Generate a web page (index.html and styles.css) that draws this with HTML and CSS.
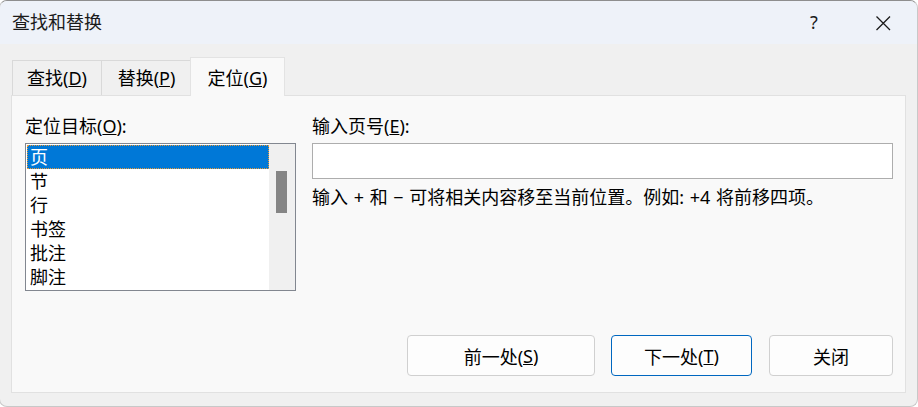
FILE: index.html
```html
<!DOCTYPE html>
<html lang="zh-CN">
<head>
<meta charset="utf-8">
<title>查找和替换</title>
<link rel="stylesheet" href="styles.css">
</head>
<body>
<div class="window">
  <div class="titlebar">
    <div class="title">查找和替换</div>
    <div class="caption-btn help">?</div>
    <div class="caption-btn close">
      <svg width="16" height="16" viewBox="0 0 16 16"><path d="M1.5 1.5 L15 15 M15 1.5 L1.5 15" stroke="#1b1b1b" stroke-width="1.3" fill="none"/></svg>
    </div>
  </div>
  <div class="body">
    <div class="tabs">
      <div class="tab t1">查找(<u>D</u>)</div>
      <div class="tab t2">替换(<u>P</u>)</div>
      <div class="tab t3 active">定位(<u>G</u>)</div>
    </div>
    <div class="panel">
      <div class="fields">
        <div class="col">
          <div class="label">定位目标(<u>O</u>):</div>
          <div class="listbox">
            <div class="items">
              <div class="item selected">页</div>
              <div class="item">节</div>
              <div class="item">行</div>
              <div class="item">书签</div>
              <div class="item">批注</div>
              <div class="item">脚注</div>
            </div>
            <div class="scrollbar"><div class="thumb"></div></div>
          </div>
        </div>
        <div class="col">
          <div class="label">输入页号(<u>E</u>):</div>
          <div class="input"></div>
          <div class="hint">输入 + 和 − 可将相关内容移至当前位置。例如: +4 将前移四项。</div>
        </div>
      </div>
      <div class="buttons">
        <div class="btn b1">前一处(<u>S</u>)</div>
        <div class="btn b2 default">下一处(<u>T</u>)</div>
        <div class="btn b3">关闭</div>
      </div>
    </div>
  </div>
</div>
</body>
</html>
```

FILE: styles.css
```css
* { box-sizing: border-box; }
html, body { margin: 0; padding: 0; background: #ffffff; }
body {
  font-family: "Noto Sans", "Noto Sans CJK SC", sans-serif;
  font-size: 18px;
  color: #000;
  width: 918px;
  height: 407px;
  overflow: hidden;
}
.window {
  margin-left: -1px;
  width: 919px;
  height: 407px;
  border: 1px solid #c8c8c8;
  border-top-color: #8e8e8e;
  border-radius: 8px;
  background: #f0f0f0;
  overflow: hidden;
  display: flex;
  flex-direction: column;
}
.titlebar {
  height: 43px;
  flex: none;
  background: #eef2f9;
  display: flex;
  align-items: center;
}
.title {
  flex: 1;
  padding-left: 12px;
  line-height: 43px;
  color: #1b1b1b;
}
.help {
  width: 52px;
  margin-right: 8px;
  text-align: center;
  line-height: 43px;
  color: #1b1b1b;
}
.close {
  width: 69px;
  height: 43px;
  display: flex;
  align-items: center;
  justify-content: center;
}
.body {
  flex: 1;
  padding: 13px 11px 0 11px;
}
.tabs {
  display: flex;
  align-items: flex-end;
  height: 38px;
  padding-left: 1px;
}
.tab {
  height: 35px;
  border: 1px solid #d9d9d9;
  border-bottom: none;
  line-height: 34px;
  text-align: center;
  background: #f0f0f0;
  margin-right: -1px;
}
.t1 { width: 90px; }
.t2 { width: 91px; }
.t3 { width: 95px; margin-left: -1px; }
.tab.active {
  height: 39px;
  margin-bottom: -1px;
  padding-top: 3px;
  background: #f9f9f9;
  border-color: #e3e3e3;
  position: relative;
  z-index: 1;
}
.panel {
  height: 298px;
  border: 1px solid #e1e1e1;
  background: #f9f9f9;
  padding: 18px 12px 16px 13px;
  display: flex;
  flex-direction: column;
}
.fields {
  display: grid;
  grid-template-columns: 271px 1fr;
  column-gap: 16px;
}
.label { line-height: 24px; }
.listbox {
  margin-top: 5px;
  height: 148px;
  border: 1px solid #828790;
  background: #fff;
  display: flex;
}
.items {
  flex: 1;
  padding: 1px 0 0 1px;
}
.item {
  height: 24px;
  line-height: 24px;
  padding-left: 3px;
}
.item.selected {
  background: #0078d7;
  color: #fff;
  outline: 1px dotted #e69a3a;
  outline-offset: -1px;
}
.scrollbar {
  width: 26px;
  background: #f0f0f0;
  padding: 27px 0 0 7px;
}
.thumb {
  width: 11px;
  height: 42px;
  background: #858585;
}
.input {
  margin-top: 5px;
  height: 36px;
  border: 1px solid #adadad;
  background: #fff;
}
.hint {
  margin-top: 6px;
  line-height: 24px;
  word-spacing: 1px;
}
.buttons {
  margin-top: auto;
  display: flex;
  justify-content: flex-end;
}
.btn {
  height: 41px;
  border: 1px solid #d0d0d0;
  border-radius: 4px;
  background: #fdfdfd;
  display: flex;
  align-items: center;
  justify-content: center;
}
.b1 { width: 188px; }
.b2 { width: 141px; margin-left: 16px; }
.b3 { width: 124px; margin-left: 17px; }
.btn.default { border-color: #0067c0; }
```
